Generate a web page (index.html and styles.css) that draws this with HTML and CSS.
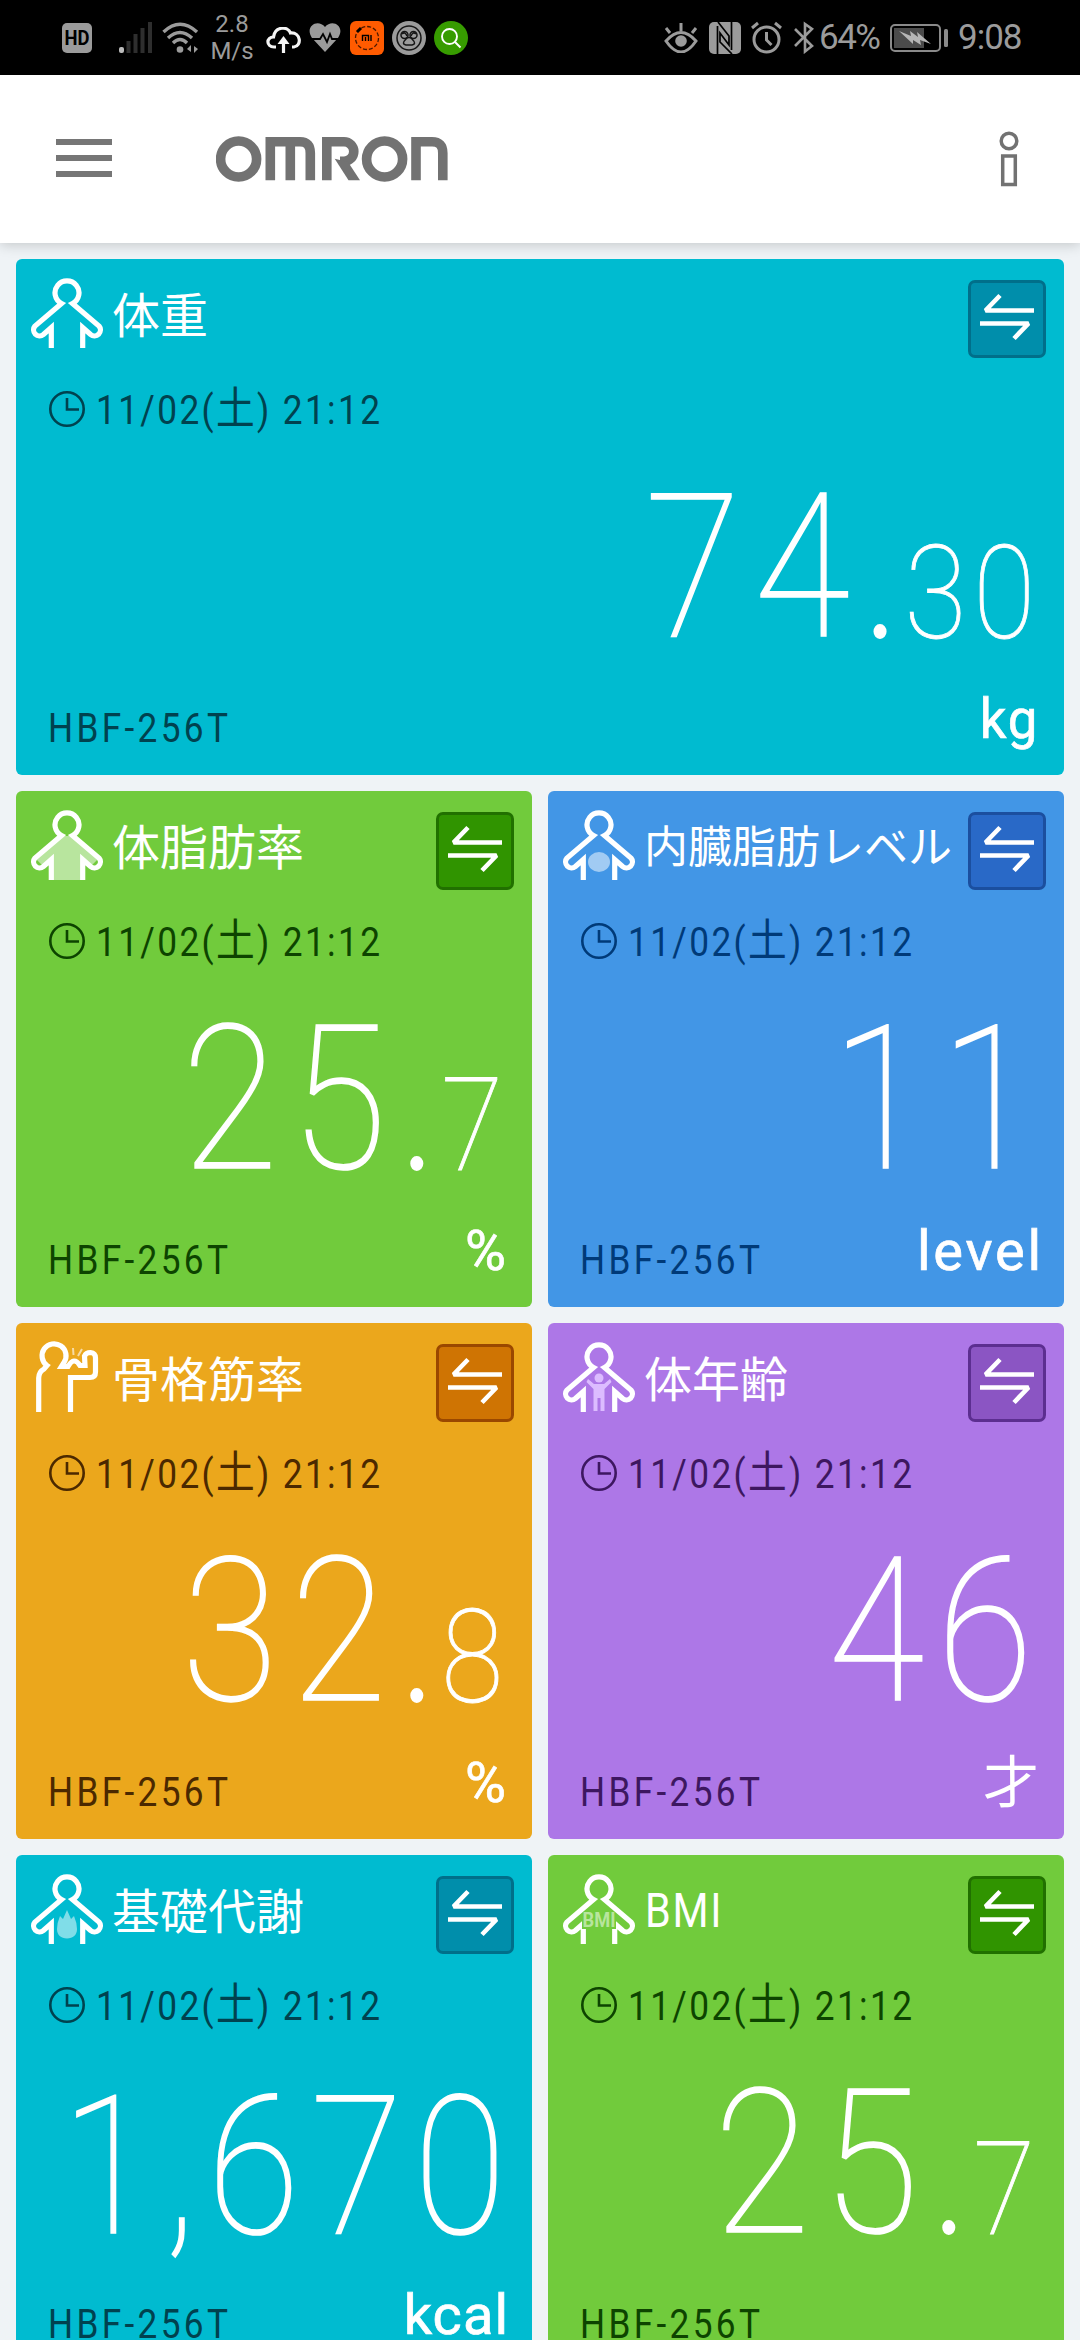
FILE: index.html
```html
<!DOCTYPE html>
<html lang="ja">
<head>
<meta charset="utf-8">
<title>OMRON connect</title>
<link rel="stylesheet" href="styles.css">
</head>
<body>
<svg class="defs" width="0" height="0" aria-hidden="true">
  <symbol id="body" viewBox="0 0 72 72">
    <path class="line" d="M20.300 72V51.500L12.400 58.500A6 6 0 0 1 4 50L30.500 27.500A12 12 0 1 1 41.500 27.500L68 50A6 6 0 0 1 59.600 58.500L51.700 51.500V72"/>
  </symbol>
  <symbol id="clock" viewBox="0 0 36 36">
    <circle cx="18" cy="18" r="16.700" fill="none" stroke="currentColor" stroke-width="2.600"/>
    <path d="M18 7v11.500h12" fill="none" stroke="currentColor" stroke-width="2.600"/>
  </symbol>
  <symbol id="swap" viewBox="0 0 54 50">
    <path d="M54 18.500H5.500L20 3.500M0 31.500h48.500L34 46.500" fill="none" stroke="#fff" stroke-width="4.600" stroke-miterlimit="1.500"/>
  </symbol>
</svg>

<div class="status">
  <svg class="hd" width="30" height="30" viewBox="0 0 30 30"><rect width="30" height="30" rx="5" fill="#9b9b9b"/><text x="15" y="22" text-anchor="middle" font-size="20" font-weight="700" textLength="25" lengthAdjust="spacingAndGlyphs">HD</text></svg>
  <svg class="signal" width="33" height="31" viewBox="0 0 33 31"><rect y="25" width="5" height="6" rx="2" fill="#bbb"/><path d="M9.500 19v12M16.500 12v19M23.500 6v25M31 0v31" stroke="#2e2e2e" stroke-width="4"/></svg>
  <svg class="wifi" width="37" height="31" viewBox="0 0 37 31" fill="none" stroke="#9b9b9b" stroke-width="3.400"><path d="M1.500 10Q18 -5.500 35 10M6 16Q18 5 30 16M11 21Q18 14 25 21"/><circle cx="18" cy="27.500" r="3.300" fill="#9b9b9b" stroke="none"/><path d="M29 23v7l-4-3zM32 31v-7l4 3z" fill="#9b9b9b" stroke="none"/></svg>
  <div class="speed"><span>2.8</span><span>M/s</span></div>
  <svg class="cloud" width="35" height="27" viewBox="0 0 35 27" fill="none" stroke="#f4f4f4" stroke-width="3.200"><path d="M10 20H8C0 20 0 10 7.500 10C9 -1 22 -1 24.500 6C35 5 36 19 28 20H26"/><path d="M17.500 26V14"/><path d="M17.500 9l6 8h-12z" fill="#f4f4f4" stroke="none"/></svg>
  <svg class="heart" width="32" height="29" viewBox="0 0 32 29"><path d="M16 29L3 15C-5 3 9 -5 16 4C23 -5 37 3 29 15z" fill="#9b9b9b"/><path d="M0 16h11l3-5 4 8 3-8 2 5h9" fill="none" stroke="#000" stroke-width="1.800"/></svg>
  <svg class="mi" width="34" height="34" viewBox="0 0 34 34"><rect width="34" height="34" rx="6" fill="#ff5b00"/><circle cx="17" cy="17" r="11.500" fill="none" stroke="#481800" stroke-width="1.300" stroke-dasharray="4 2"/><path d="M7 11l4-4" stroke="#000" stroke-width="3"/><path d="M12.500 20v-5.500h6V20M15.500 16v4M21 14v6" fill="none" stroke="#000" stroke-width="1.400"/></svg>
  <svg class="monkey" width="34" height="34" viewBox="0 0 34 34" fill="none" stroke="#151515" stroke-width="1.500"><circle cx="17" cy="17" r="17" fill="#9b9b9b" stroke="none"/><circle cx="17" cy="17" r="12"/><circle cx="12.500" cy="14" r="3.500"/><circle cx="21.500" cy="14" r="3.500"/><path d="M10 13q3-3 5 2M24 13q-3-3-5 2M14 18q-5 5 0 6h6q5-1 0-6-3-3-6 0"/></svg>
  <svg class="search" width="34" height="34" viewBox="0 0 34 34" fill="none" stroke="#fff" stroke-width="1.900"><circle cx="17" cy="17" r="17" fill="#379c00" stroke="none"/><circle cx="15.500" cy="15.500" r="7.500"/><path d="M21 21l5.500 5.500"/></svg>

  <svg class="eye" width="34" height="31" viewBox="0 0 34 31" fill="none" stroke="#9b9b9b" stroke-width="3"><path d="M2 19Q17 2 32 19Q17 41 2 19zM17 1v8M2 6l4 5M32 6l-4 5"/><circle cx="17" cy="19" r="5.800" fill="#9b9b9b" stroke="none"/></svg>
  <svg class="nfc" width="32" height="32" viewBox="0 0 32 32"><rect width="32" height="32" rx="5" fill="#9b9b9b"/><path d="M9 0L20 14V23L11 11V20L23 32M8.500 32V4M22.500 0V28" fill="none" stroke="#000" stroke-width="1.700"/></svg>
  <svg class="alarm" width="31" height="33" viewBox="0 0 31 33" fill="none" stroke="#9b9b9b" stroke-width="3"><circle cx="15.500" cy="18.500" r="12.500"/><path d="M15.500 11v8l5 5M1 7l6-5M30 7l-6-5"/></svg>
  <svg class="bt" width="20" height="33" viewBox="0 0 20 33" fill="none" stroke="#9b9b9b" stroke-width="2.600"><path d="M1 8l17 17-7 5.500V3L18 8 1 25"/></svg>
  <span class="pct">64%</span>
  <svg class="battery" width="58" height="28" viewBox="0 0 58 28"><rect x="1" y="1" width="49" height="26" rx="4" fill="none" stroke="#8a8a8a" stroke-width="2"/><rect x="4" y="4" width="30" height="20" fill="#4b4b4b"/><path d="M9 7l12 5-1-5 8 6-1-5 14 12-11-4 1 5-8-5v4z" fill="#b5b5b5"/><rect x="54" y="5" width="4" height="18" rx="1.500" fill="#8a8a8a"/></svg>
  <span class="time">9:08</span>
</div>

<header class="bar">
  <div class="menu"><i></i><i></i><i></i></div>
  <svg class="logo" width="234" height="46" viewBox="0 0 234 46" role="img" aria-label="OMRON" fill="none" stroke="#727272" stroke-width="9.600">
    <circle cx="22.600" cy="23" r="18"/>
    <path d="M54.300 44.300V5.700H84Q94.300 5.700 94.300 17V44.300M74.300 5.700V44.300"/>
    <path d="M110.800 44.300V5.700H128A9.800 9.800 0 0 1 128 25.300H124"/>
    <path d="M118.700 22.700L132.500 44.300H144L132 26z" fill="#727272" stroke="none"/>
    <circle cx="168.600" cy="23" r="18"/>
    <path d="M200 44.300V5.700H216Q226.800 5.700 226.800 17V44.300"/>
  </svg>
  <svg class="info" width="20" height="56" viewBox="0 0 20 56" fill="none" stroke="#727272" stroke-width="3.500"><circle cx="10" cy="10" r="7.800"/><rect x="3.700" y="25" width="12.600" height="28.500"/></svg>
</header>

<main class="grid">
  <section class="card wide teal">
    <div class="head"><svg class="icon"><use href="#body"/></svg><h2>体重</h2><button class="swap"><svg><use href="#swap"/></svg></button></div>
    <div class="date"><svg><use href="#clock"/></svg><span>11/02(<b>土</b>) 21:12</span></div>
    <div class="value"><span class="int">74</span><span class="dot">.</span><span class="dec">30</span></div>
    <div class="foot"><span class="model">HBF-256T</span><span class="unit kg">kg</span></div>
  </section>

  <section class="card green">
    <div class="head"><svg class="icon" viewBox="0 0 72 72"><path d="M31 28h10l26 23-7 7-8-7v21H20V51l-8 7-7-7z" fill="#fff" opacity=".5"/><use href="#body"/></svg><h2>体脂肪率</h2><button class="swap"><svg><use href="#swap"/></svg></button></div>
    <div class="date"><svg><use href="#clock"/></svg><span>11/02(<b>土</b>) 21:12</span></div>
    <div class="value"><span class="int">25</span><span class="dot">.</span><span class="dec">7</span></div>
    <div class="foot"><span class="model">HBF-256T</span><span class="unit percent">%</span></div>
  </section>

  <section class="card blue">
    <div class="head"><svg class="icon" viewBox="0 0 72 72"><use href="#body"/><ellipse cx="36" cy="54" rx="11" ry="10" fill="#fff" opacity=".5"/></svg><h2 class="long">内臓脂肪レベル</h2><button class="swap"><svg><use href="#swap"/></svg></button></div>
    <div class="date"><svg><use href="#clock"/></svg><span>11/02(<b>土</b>) 21:12</span></div>
    <div class="value"><span class="int ones">11</span></div>
    <div class="foot"><span class="model">HBF-256T</span><span class="unit level">level</span></div>
  </section>

  <section class="card orange">
    <div class="head"><svg class="icon" viewBox="0 0 72 72"><path class="line" d="M7.700 72V38Q7.700 32 13 29L16 25.500A12 12 0 1 1 33 22.500L30.500 26.500H37Q43 16 49 25.500H54L53.500 16Q55 12.500 59.500 12.500Q64.500 13 64.500 18V32Q64.500 37.500 59 37.500H39.500V72"/><path d="M42 8l.5 7M51 9l-4 7" stroke="#fff" stroke-width="2" opacity=".6"/></svg><h2>骨格筋率</h2><button class="swap"><svg><use href="#swap"/></svg></button></div>
    <div class="date"><svg><use href="#clock"/></svg><span>11/02(<b>土</b>) 21:12</span></div>
    <div class="value"><span class="int">32</span><span class="dot">.</span><span class="dec">8</span></div>
    <div class="foot"><span class="model">HBF-256T</span><span class="unit percent">%</span></div>
  </section>

  <section class="card purple">
    <div class="head"><svg class="icon" viewBox="0 0 72 72"><use href="#body"/><g fill="#dcbcff"><circle cx="36" cy="38" r="4.500"/><path d="M25 39l6 5h10l6-5 1.500 3-7 7v22h-4V58h-3v13h-4V49l-7-7z"/></g></svg><h2>体年齢</h2><button class="swap"><svg><use href="#swap"/></svg></button></div>
    <div class="date"><svg><use href="#clock"/></svg><span>11/02(<b>土</b>) 21:12</span></div>
    <div class="value"><span class="int">46</span></div>
    <div class="foot"><span class="model">HBF-256T</span><span class="unit age">才</span></div>
  </section>

  <section class="card teal">
    <div class="head"><svg class="icon" viewBox="0 0 72 72"><use href="#body"/><path d="M36 38l4 9 3-3q3 7 3 13c0 6-4 9.500-10 9.500S26 63 26 57q0-6 3-13l3 3z" fill="#fff" opacity=".5"/></svg><h2>基礎代謝</h2><button class="swap"><svg><use href="#swap"/></svg></button></div>
    <div class="date"><svg><use href="#clock"/></svg><span>11/02(<b>土</b>) 21:12</span></div>
    <div class="value"><span class="int kilo">1,670</span></div>
    <div class="foot"><span class="model">HBF-256T</span><span class="unit kcal">kcal</span></div>
  </section>

  <section class="card green">
    <div class="head"><svg class="icon" viewBox="0 0 72 72"><use href="#body"/><path d="M19 41h34v16H19z" fill="#71cb3c"/><text x="36" y="55" text-anchor="middle" font-size="21" font-weight="700" fill="#b8e59d" textLength="33" lengthAdjust="spacingAndGlyphs">BMI</text></svg><h2 class="latin">BMI</h2><button class="swap"><svg><use href="#swap"/></svg></button></div>
    <div class="date"><svg><use href="#clock"/></svg><span>11/02(<b>土</b>) 21:12</span></div>
    <div class="value"><span class="int">25</span><span class="dot">.</span><span class="dec">7</span></div>
    <div class="foot"><span class="model">HBF-256T</span></div>
  </section>
</main>
</body>
</html>
```
FILE: styles.css
```css
* { box-sizing: border-box; }
body {
  margin: 0;
  width: 1080px;
  height: 2340px;
  overflow: hidden;
  background: #eff3f6;
  font-family: Roboto, "Noto Sans CJK JP", sans-serif;
}
svg { display: block; flex: none; }
.defs { position: absolute; }

/* status bar */
.status {
  display: flex;
  align-items: center;
  height: 75px;
  padding-left: 62px;
  background: #000;
  color: #9b9b9b;
  white-space: nowrap;
}
.signal { margin-left: 27px; }
.wifi { margin-left: 10px; }
.speed {
  display: flex;
  flex-direction: column;
  align-items: center;
  width: 42px;
  margin-left: 12px;
  font-size: 24px;
  line-height: 27px;
}
.cloud { margin: 5px 0 0 13px; }
.heart { margin-left: 8px; }
.mi { margin-left: 9px; }
.monkey, .search { margin-left: 8px; }
.eye { margin-left: 196px; }
.nfc { margin-left: 11px; }
.alarm { margin-left: 10px; }
.bt { margin-left: 12px; }
.pct { width: 62px; margin-left: 5px; font-size: 35px; letter-spacing: -1.5px; }
.battery { margin-left: 9px; }
.time { margin-left: 10px; font-size: 35px; letter-spacing: -1px; }

/* app bar */
.bar {
  position: relative;
  display: flex;
  align-items: flex-start;
  height: 168px;
  padding-left: 56px;
  background: #fff;
  box-shadow: 0 2px 12px rgba(0, 0, 0, .18);
}
.menu { display: grid; gap: 10px; width: 56px; margin-top: 64px; }
.menu i { height: 6px; background: #767676; }
.logo { margin: 61px 0 0 104px; }
.info { margin: 56px 0 0 549px; }

/* cards */
.grid {
  display: grid;
  grid-template-columns: 516px 516px;
  grid-auto-rows: 516px;
  gap: 16px;
  padding: 16px;
}
.card { border-radius: 6px; color: var(--ink); background: var(--bg); }
.wide { grid-column: 1 / 3; }
.teal { --bg: #00bbd0; --ink: #00424f; --btn: #008eab; --edge: #006f8a; }
.green { --bg: #71cb3c; --ink: #0d4400; --btn: #309400; --edge: #217000; }
.blue { --bg: #4296e6; --ink: #003a78; --btn: #2969c7; --edge: #1b4f9f; }
.orange { --bg: #eba71c; --ink: #4b2900; --btn: #cf7403; --edge: #9a4800; }
.purple { --bg: #ad77e7; --ink: #3d1760; --btn: #8b55c3; --edge: #5c2e90; }
.line { fill: none; stroke: #fff; stroke-width: 5.2; stroke-miterlimit: 6; }
.head { display: flex; align-items: center; height: 112px; padding: 0 18px 0 15px; }
.icon { width: 72px; height: 72px; margin-top: -6px; }
h2 {
  flex: 1;
  margin: -7px 0 0 9px;
  color: #fff;
  font: 400 48px/60px "Noto Sans CJK JP", sans-serif;
  white-space: nowrap;
}
h2.long { font-size: 44px; }
h2.latin {
  margin-left: 10px;
  padding-top: 7px;
  font-family: Roboto, sans-serif;
  letter-spacing: 2px;
  transform: scaleX(.86);
  transform-origin: 0 0;
}
.swap {
  display: grid;
  place-items: center;
  width: 78px;
  height: 78px;
  margin-top: 8px;
  padding: 0 0 4px;
  border: 3px solid var(--edge);
  border-radius: 7px;
  background: var(--btn);
}
.swap svg { width: 54px; height: 50px; }
.date {
  display: flex;
  align-items: center;
  height: 76px;
  padding-left: 33px;
  font-size: 40px;
  line-height: 76px;
  white-space: pre;
}
.date svg { width: 36px; height: 36px; }
.date span {
  height: 76px;
  margin: 0 0 0 11px;
  letter-spacing: 2.7px;
  transform: scaleX(.88);
  transform-origin: 0 0;
}
.date b { font-weight: 400; font-size: 44px; }
.value {
  display: flex;
  justify-content: flex-end;
  height: 200px;
  margin-top: 21px;
  padding-right: 21px;
  color: #fff;
  font-size: 201px;
  line-height: 200px;
  font-weight: 100;
  letter-spacing: 15px;
  transform: scaleX(.87);
  transform-origin: 100% 0;
  -webkit-text-stroke: 1.6px #fff;
}
.ones { margin-right: -4px; }
.dot { letter-spacing: 5px; -webkit-text-stroke: 4px #fff; }
.dec { margin-right: 4px; font-size: 130px; line-height: 251px; letter-spacing: 8px; -webkit-text-stroke: .9px #fff; }
.kilo { margin-right: -4px; font-size: 193px; line-height: 207px; letter-spacing: 13px; }
.foot { display: flex; justify-content: space-between; height: 107px; padding: 0 25px 0 32px; }
.model {
  margin-top: 47px;
  font-size: 40px;
  line-height: 28px;
  letter-spacing: 3.8px;
  transform: scaleX(.88);
  transform-origin: 0 0;
}
.unit {
  height: 48px;
  margin-top: 27px;
  color: #fff;
  font-size: 56px;
  line-height: 48px;
  -webkit-text-stroke: .7px #fff;
}
.kg { letter-spacing: 2px; transform: scaleX(.94); transform-origin: 100% 0; }
.percent { margin-right: 1px; }
.level { margin-right: -5px; letter-spacing: 2.8px; }
.kcal { letter-spacing: 1px; margin-right: -2px; }
.age { -webkit-text-stroke: 0; }
```
